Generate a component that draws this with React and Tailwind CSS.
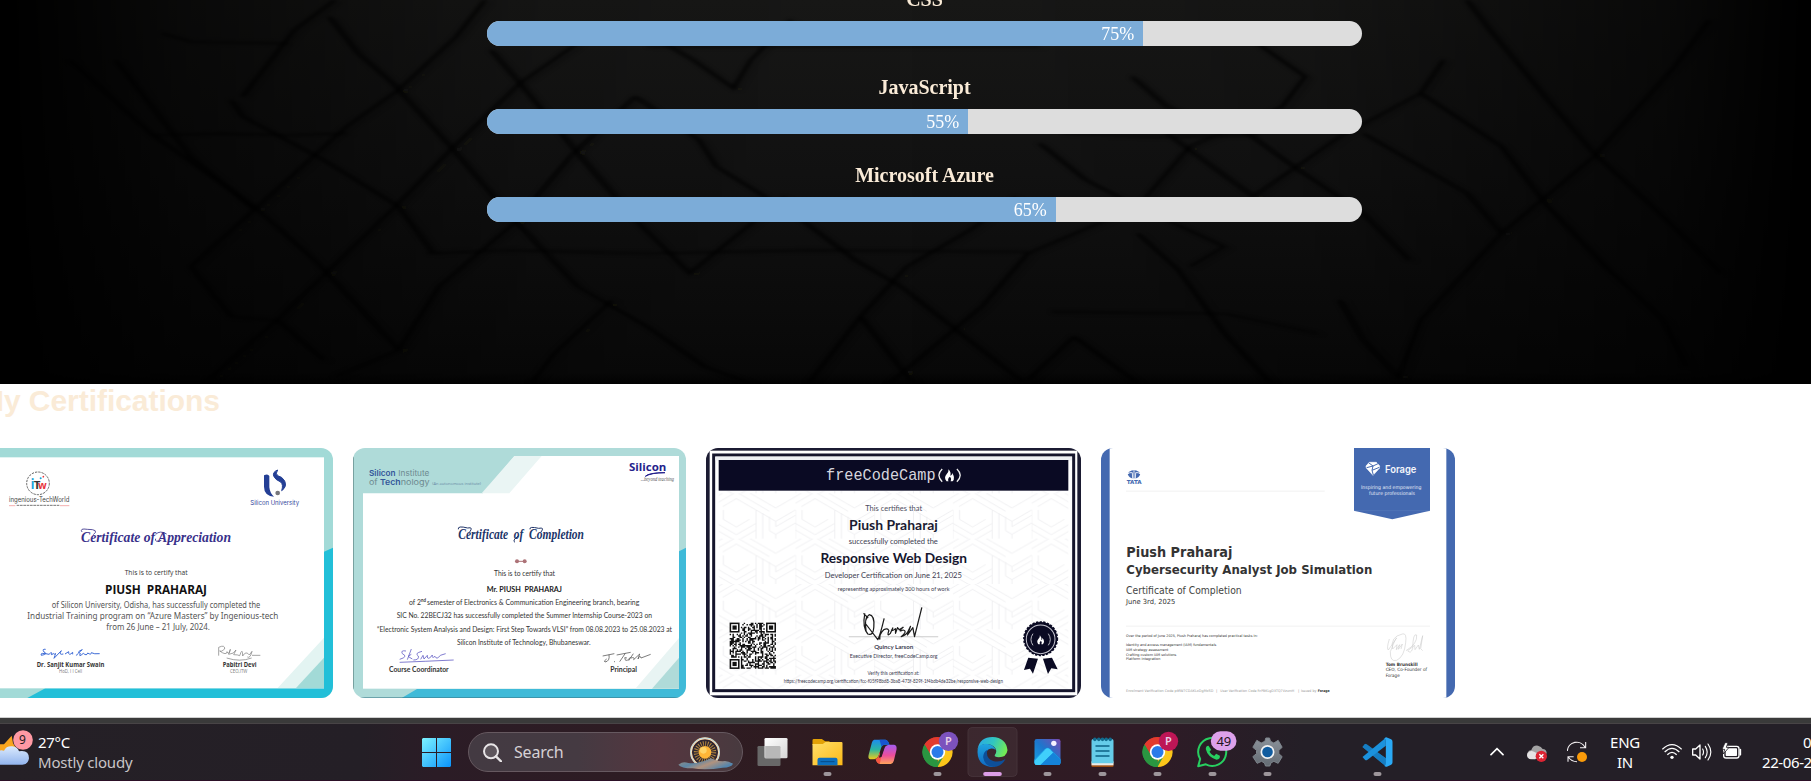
import React from "react";

const SANS = "'Noto Sans', sans-serif";
const OPEN = "'Open Sans', sans-serif";
const LATO = "Lato, sans-serif";
const DEJA = "'DejaVu Sans', sans-serif";

/* Text run inside a certificate, fitted to a given width. */
function T({ x, y, w, s, f = OPEN, c = "#333", b = 400, i, a = "start", children }) {
  return (
    <text x={x} y={y} textLength={w} lengthAdjust="spacingAndGlyphs" fontSize={s} fontFamily={f} fill={c} fontWeight={b} fontStyle={i ? "italic" : "normal"} textAnchor={a} xmlSpace="preserve">
      {children}
    </text>
  );
}

const CRACKS = [
  "420,0 395,110 345,270 300,380 220,630 165,800",
  "285,50 310,160 340,250 390,440 445,660 500,860",
  "60,180 130,400 220,620 275,790 345,1050",
  "100,180 165,470 220,630",
  "200,300 210,350 280,480 345,620 375,760",
  "500,130 450,250 390,450 345,610 300,760 240,960 180,1140",
  "565,110 600,180 635,265 650,180 685,60",
  "425,150 450,250 500,460 550,660 597,820 640,700 680,590",
  "290,1130 345,1050 380,860 445,670 495,465 550,290",
  "550,290 605,420 620,500 690,650 740,780 780,860 835,1010 885,1145",
  "140,100 165,125 250,130", "130,405 190,400 250,405 300,400", "210,290 255,90 290,0",
  "900,430 940,540 985,620 1060,740 1030,800",
  "980,230 1010,320 1080,400 1120,500 1180,640 1220,780",
  "1080,110 1130,230 1110,320 1030,440 985,620 890,760 850,920 770,1150",
  "1010,400 1085,590 1160,410 1230,280 1250,180",
  "1230,280 1300,440 1340,620 1390,800 1440,960 1460,1100",
  "1270,0 1290,90 1340,300 1380,460 1440,650 1490,820",
  "1480,60 1450,200 1380,470 1300,700 1230,960 1210,1140",
  "1180,400 1270,580 1300,700", "700,1150 745,950 785,800 840,690 880,590", "745,950 790,1150",
  "985,700 1020,810 1060,1000 1100,1150", "500,860 560,980 610,1100 650,1150",
  "370,760 440,750 560,760 700,750 890,755", "910,935 1060,940 1140,1000", "560,140 900,140",
  "920,400 1000,410 1090,405", "930,1010 890,1140", "930,1010 985,1150", "1160,900 1180,1020 1210,1130",
  "530,900 480,1060 460,1150", "165,800 200,950 240,960 280,1080",
];

function Backdrop() {
  return (
    <svg className="absolute inset-0 h-full w-full" viewBox="0 0 1568 1152" preserveAspectRatio="none" aria-hidden="true">
      <defs>
        <linearGradient id="wall" x1="0" y1="0" x2="0" y2="1">
          <stop offset="0" stopColor="#181817" /><stop offset="0.45" stopColor="#121212" /><stop offset="0.8" stopColor="#0c0c0c" /><stop offset="0.97" stopColor="#090909" /><stop offset="1" stopColor="#030303" />
        </linearGradient>
        <linearGradient id="sides" x1="0" y1="0" x2="1" y2="0">
          <stop offset="0" stopColor="#000" /><stop offset="0.1" stopColor="#000" stopOpacity="0.6" /><stop offset="0.3" stopColor="#000" stopOpacity="0.12" /><stop offset="0.5" stopColor="#000" stopOpacity="0" />
          <stop offset="0.72" stopColor="#000" stopOpacity="0.12" /><stop offset="0.92" stopColor="#000" stopOpacity="0.6" /><stop offset="1" stopColor="#000" />
        </linearGradient>
        <filter id="soft"><feGaussianBlur stdDeviation="1.8 4.5" /></filter>
      </defs>
      <rect width="1568" height="1152" fill="url(#wall)" />
      <g filter="url(#soft)" fill="none">
        {CRACKS.map((p) => <polyline key={"l" + p} points={p} transform="translate(6 5)" stroke="#242422" strokeWidth="3" opacity="0.22" />)}
        {CRACKS.map((p) => <polyline key={p} points={p} stroke="#000" strokeWidth="5" opacity="0.7" />)}
      </g>
      <rect width="1568" height="1152" fill="url(#sides)" />
    </svg>
  );
}

function Skill({ name, value }) {
  return (
    <div className="mb-[35px]">
      <h3 className="mb-[10px] h-[18px] text-center text-[20px] leading-[13px] font-bold text-[#faebd7]">{name}</h3>
      <div className="h-[25px] overflow-hidden rounded-full bg-[#ddd]">
        <div className="h-full bg-[#7cacd8] pr-[9px] text-right text-[18px] leading-[26px] text-white" style={{ width: value + "%" }}>{value}%</div>
      </div>
    </div>
  );
}

function AppreciationCert() {
  return (
    <svg className="h-[250px] w-[353px] shrink-0 rounded-[12px]" viewBox="-60 234 1059 750" preserveAspectRatio="none">
      <rect x="-60" y="234" width="1059" height="750" fill="#a2dad7" />
      <path d="M82 984 136 955H972V545L999 533V984Z" fill="#22bfd8" />
      <rect x="-33" y="262" width="1005" height="693" fill="#fff" />
      <path d="M833 954 972 803V954Z" fill="#e3f4f2" /><path d="M888 954 972 863V954Z" fill="#a2dad7" />
      <circle cx="114" cy="340" r="34" fill="none" stroke="#444" strokeWidth="2.5" strokeDasharray="7 3" />
      <T x={92} y={356} w={11} s={40} b={700} c="#18a5dc">i</T>
      <T x={101} y={356} w={20} s={34} b={700} c="#333">T</T>
      <T x={114} y={356} w={26} s={32} b={700} c="#e8343c">w</T>
      <circle cx="122" cy="325" r="3" fill="#18a5dc" /><circle cx="130" cy="320" r="2.5" fill="#e8343c" />
      <T x={27} y={397} w={181} s={21} f="Inter, sans-serif" c="#444">ingenious-TechWorld</T>
      <path d="M27 407H46M180 407H208" stroke="#e88" strokeWidth="2" /><path d="M50 406H178" stroke="#777" strokeWidth="3" strokeDasharray="8 2" />
      <path d="M792 316Q804 310 808 318V352Q810 370 822 380Q792 377 792 350Z" fill="#243f95" />
      <path d="M833 300Q817 306 821 318Q825 329 842 336Q851 344 845 362Q862 350 854 333Q847 320 833 317Q825 311 833 300Z" fill="#243f95" stroke="#243f95" strokeWidth="3" />
      <circle cx="833" cy="369" r="7" fill="#77777c" />
      <T x={751} y={404} w={146} s={19} f="Inter, sans-serif" c="#33479b">Silicon University</T>
      <T x={243} y={516} w={450} s={46} f="'Liberation Serif', serif" i b={700} c="#38308a">Certificate of Appreciation</T>
      <path d="M246 486Q238 474 262 478Q300 478 280 494M467 506Q462 518 484 511M467 493Q480 480 500 492" fill="none" stroke="#38308a" strokeWidth="2.5" />
      <T x={374} y={616} w={189} s={22}>This is to certify that</T>
      <T x={315} y={672} w={306} s={39} b={700} c="#111">PIUSH  PRAHARAJ</T>
      <T x={155} y={714} w={626} s={25} f={SANS} c="#555">of Silicon University, Odisha, has successfully completed the</T>
      <T x={82} y={747} w={753} s={25} f={SANS} c="#555">Industrial Training program on “Azure Masters” by Ingenious-tech</T>
      <T x={319} y={780} w={311} s={25} f={SANS} c="#555">from 26 June – 21 July, 2024.</T>
      <path d="M137 838Q125 836 132 846Q146 852 124 856Q118 846 147 853Q158 842 154 854Q164 848 164 853Q170 843 162 865L184 842Q175 856 190 852M195 852L206 845Q205 860 218 847V853M230 857Q226 856 247 839Q228 846 241 850Q234 864 250 850Q260 859 263 849Q274 856 274 848Q282 853 299 851" fill="none" stroke="#3d6bd6" strokeWidth="3" />
      <path d="M656 857V832Q675 823 674 837Q664 847 659 843Q680 858 681 845Q687 858 691 838L686 853Q702 852 708 840L701 854Q714 854 719 857Q728 830 728 858Q738 841 748 855L756 844Q751 866 742 861M756 856H781M680 864Q720 877 755 864" fill="none" stroke="#777" strokeWidth="2" />
      <T x={110} y={891} w={203} s={20} b={700} c="#333">Dr. Sanjit Kumar Swain</T>
      <T x={177} y={910} w={69} s={15} c="#777">HoD, I I Cell</T>
      <T x={668} y={891} w={102} s={20} b={700} c="#333">Pabitri Devi</T>
      <T x={690} y={910} w={52} s={14} c="#777">CEO,ITW</T>
    </svg>
  );
}

function CompletionCert() {
  return (
    <svg className="h-[250px] w-[333px] shrink-0 rounded-[12px]" viewBox="24 54 999 750" preserveAspectRatio="none">
      <rect x="24" y="54" width="999" height="750" fill="#afdbd9" />
      <path d="M170 804 216 777H1002V364L1023 353V804Z" fill="#3fbad8" />
      <rect x="54" y="78" width="948" height="698" fill="#fff" />
      <path d="M50 74H512L414 190H50Z" fill="#afdbd9" /><path d="M508 78H590L493 190H410Z" fill="#eaf5f4" />
      <path d="M871 776 1002 624V776Z" fill="#e8f4f3" /><path d="M921 776 1002 683V776Z" fill="#afdbd9" />
      <path d="M25 80V778" stroke="#4c7171" strokeWidth="2" /><path d="M46 803H1000" stroke="#38798a" strokeWidth="2" />
      <T x={72} y={139} w={80} s={24} f="Inter, sans-serif" b={600} c="#34579a">Silicon</T>
      <T x={160} y={139} w={93} s={24} f="Inter, sans-serif" c="#6d8a90">Institute</T>
      <T x={72} y={165} w={26} s={24} f="Inter, sans-serif" c="#6d8a90">of</T>
      <T x={105} y={165} w={62} s={24} f="Inter, sans-serif" b={600} c="#34579a">Tech</T>
      <T x={167} y={165} w={87} s={24} f="Inter, sans-serif" c="#6d8a90">nology</T>
      <T x={262} y={164} w={146} s={13} c="#6888a4">(An autonomous institute)</T>
      <T x={852} y={124} w={112} s={32} b={700} c="#24218c">Silicon</T>
      <path d="M901 139Q910 128 960 128Q920 128 901 139Z" fill="#24218c" stroke="#24218c" strokeWidth="3" />
      <T x={887} y={153} w={100} s={17} f="'Liberation Serif', serif" i c="#555">...beyond teaching</T>
      <T x={340} y={326} w={377} s={44} f="'Liberation Serif', serif" i b={700} c="#203468">Certificate  of  Completion</T>
      <path d="M340 298Q337 286 368 294Q386 290 374 306M555 298Q552 288 581 295Q600 291 588 306M510 337Q500 332 520 318" fill="none" stroke="#203468" strokeWidth="3" />
      <circle cx="516" cy="394" r="6" fill="#ad7378" /><circle cx="539" cy="394" r="6" fill="#ad7378" /><path d="M516 394H539" stroke="#ad7378" strokeWidth="3" />
      <T x={447} y={439} w={183} s={22} f={LATO} c="#333">This is to certify that</T>
      <T x={425} y={487} w={226} s={23} f={LATO} b={700} c="#222">Mr. PIUSH  PRAHARAJ</T>
      <text x="192" y="525" fontSize="22" fontFamily={LATO} fill="#333" textLength="691" lengthAdjust="spacingAndGlyphs">of 2<tspan fontSize="14" fontWeight="700" dy="-8">nd </tspan><tspan dy="8">semester of Electronics &amp; Communication Engineering branch, bearing</tspan></text>
      <T x={155} y={565} w={766} s={22} f={LATO}>SIC No. 22BECJ32 has successfully completed the Summer Internship Course-2023 on</T>
      <T x={96} y={605} w={885} s={22} f={LATO}>“Electronic System Analysis and Design: First Step Towards VLSI” from 08.08.2023 to 25.08.2023 at</T>
      <T x={336} y={645} w={401} s={22} f={LATO}>Silicon Institute of Technology, Bhubaneswar.</T>
      <path d="M183 663Q166 660 172 671Q191 680 164 688M199 657L187 689M199 673L189 679 202 687M231 664Q207 670 220 678Q223 690 205 690M227 688L234 676 237 687 247 676Q246 688 254 684L262 675Q260 687 270 679Q275 691 286 676M286 676L302 671M164 697Q240 694 326 690" fill="none" stroke="#6763c6" strokeWidth="2.5" />
      <path d="M773 678L808 671M792 674Q795 694 780 696Q774 694 785 687M807 696L810 694M815 675L857 667M841 670L824 695M837 685Q849 678 840 689Q846 696 857 681M865 671L851 692M858 684Q870 680 866 689L884 672L879 687Q885 673 888 684L917 673" fill="none" stroke="#555" strokeWidth="2.3" />
      <T x={132} y={725} w={179} s={21} f={LATO} b={700}>Course Coordinator</T>
      <T x={796} y={725} w={80} s={21} f={LATO} b={700}>Principal</T>
    </svg>
  );
}

function QrCode() {
  const cells = [];
  let seed = 41;
  const n = 33;
  for (let y = 0; y < n; y++)
    for (let x = 0; x < n; x++) {
      seed = (seed * 16807) % 2147483647;
      const finder = (x < 8 && y < 8) || (x > n - 9 && y < 8) || (x < 8 && y > n - 9);
      if (!finder && seed % 100 < 52) cells.push(`M${x} ${y}h1v1h-1z`);
    }
  return (
    <g transform="translate(105 578) scale(4.2)">
      <path d={cells.join("")} fill="#111" />
      {[[0, 0], [26, 0], [0, 26]].map(([x, y]) => (
        <g key={x + "-" + y}><rect x={x + 0.5} y={y + 0.5} width="6" height="6" fill="#fff" stroke="#111" strokeWidth="1.1" /><rect x={x + 2} y={y + 2} width="3" height="3" fill="#111" /></g>
      ))}
    </g>
  );
}

const Flame = () => <path d="M-3-18Q6-8 2 1Q9-1 7-8Q19 7 9 18H3Q7 9 1 4Q-7 10-3 18H-9Q-18 7-9-3Q-2-10-3-18Z" fill="#fff" />;

function CampCert() {
  const navy = "#0a0a23";
  return (
    <svg className="h-[250px] w-[375px] shrink-0 rounded-[12px]" viewBox="34 54 1124 750" preserveAspectRatio="none">
      <defs>
        <pattern id="weave" width="236" height="136" patternUnits="userSpaceOnUse" patternTransform="translate(66 190)">
          <g fill="none" stroke="#ededf0" strokeWidth="2.5">
            <path d="M0 10 59-24 118 10 177 44 236 10M0 30 59-4 100 20 158 54M18 40 59 16 118 50V136M0 50V90L59 124 118 90M20 50V78L59 101 98 78M118 50 177 84 236 50M138 60V136M158 70V112L177 123 236 89M177 84V100L236 66M0 90 0 136M0 110 59 144 118 110M177 123V136" />
          </g>
        </pattern>
      </defs>
      <rect x="34" y="54" width="1124" height="750" fill="#1b1b32" />
      <rect x="45" y="62" width="1102" height="734" fill="#fff" />
      <rect x="57" y="75" width="1079" height="707" fill="#fff" stroke="#15152c" strokeWidth="9" />
      <rect x="62" y="80" width="1069" height="11" fill="#eef0f4" />
      <rect x="72" y="182" width="1048" height="594" fill="url(#weave)" />
      <rect x="72" y="90" width="1048" height="92" fill={navy} />
      <T x={394} y={149} w={328} s={49} f="'Liberation Mono', monospace" c="#d6d6de">freeCodeCamp</T>
      <path d="M742 117Q722 136 742 155M786 117Q806 136 786 155" fill="none" stroke="#eee" strokeWidth="4" />
      <g transform="translate(764 136)"><Flame /></g>
      <T x={511} y={244} w={171} s={22} f={LATO} c="#4d4d60">This certifies that</T>
      <T x={463} y={300} w={266} s={42} f={LATO} b={700} c="#1b1b32">Piush Praharaj</T>
      <T x={462} y={341} w={267} s={22} f={LATO} c="#3b3b4f">successfully completed the</T>
      <T x={377} y={399} w={439} s={42} f={LATO} b={700} c="#16162e">Responsive Web Design</T>
      <T x={390} y={443} w={411} s={22} f={LATO} c="#3b3b4f">Developer Certification on June 21, 2025</T>
      <T x={429} y={484} w={335} s={18} f={LATO} c="#3b3b4f">representing approximately 300 hours of work</T>
      <path d="M462 620H730" stroke="#ccc" strokeWidth="3" />
      <path d="M510 550Q502 592 519 612Q536 618 537 591Q540 556 523 554Q507 563 514 605M506 550L520 564M513 582 549 629Q556 616 568 565M555 629Q553 611 567 599Q579 593 582 602Q575 621 586 611L594 594Q584 609 602 596V610L608 593 613 599 625 592Q607 608 625 600Q639 604 619 620Q635 614 639 605L647 589 638 615 654 593 659 620 681 532" fill="none" stroke="#1b1b1b" strokeWidth="3.7" strokeLinejoin="round" />
      <T x={538} y={657} w={117} s={19} f={LATO} b={700} c="#3b3b4f">Quincy Larson</T>
      <T x={465} y={683} w={263} s={17} f={LATO} c="#3b3b4f">Executive Director, freeCodeCamp.org</T>
      <T x={518} y={734} w={155} s={15} f={LATO} c="#3b3b4f">Verify this certification at:</T>
      <T x={267} y={759} w={657} s={15} f={LATO} c="#3b3b4f">https://freecodecamp.org/certification/fcc-f05f98bd8-3ba8-473f-829f-1f4bdb4de32be/responsive-web-design</T>
      <QrCode />
      <path d="M1000 683 987 720 1005 716 1014 731 1029 686M1071 683 1088 718 1069 715 1059 732 1044 686Z" fill={navy} />
      <circle cx="1037" cy="626" r="50" fill={navy} stroke={navy} strokeWidth="5" strokeDasharray="7 4" />
      <circle cx="1037" cy="628" r="43" fill="none" stroke="#c8c8d2" strokeWidth="3" />
      <path d="M1014 611Q1002 629 1014 646M1060 611Q1072 629 1060 646" fill="none" stroke="#d8d8e0" strokeWidth="2.5" />
      <g transform="translate(1037 629) scale(.75)"><Flame /></g>
    </svg>
  );
}

function ForageCert() {
  const blue = "#4469b0";
  return (
    <svg className="h-[250px] w-[354px] shrink-0 rounded-[12px]" viewBox="33 54 1062 750" preserveAspectRatio="none">
      <rect x="33" y="54" width="1062" height="750" fill={blue} />
      <rect x="59" y="54" width="1010" height="750" fill="#fff" />
      <path d="M792 54H1020V242L907 268 792 242Z" fill={blue} /><path d="M794 242H1018" stroke="#5b7dbd" strokeWidth="1.5" />
      <path d="M838 97H859L869 108 868 115 849 136 829 114 828 108Z" fill="#fff" stroke="#fff" strokeWidth="2" />
      <path d="M837 99 849 108 830 113M849 108 864 101M849 108 846 121 868 112M846 121 850 135" fill="none" stroke={blue} strokeWidth="3" />
      <T x={885} y={129} w={94} s={31} f="Inter, sans-serif" b={600} c="#f4f6fb">Forage</T>
      <T x={813} y={177} w={181} s={15} f={DEJA} c="#e4eaf6">Inspiring and empowering</T>
      <T x={837} y={195} w={138} s={15} f={DEJA} c="#e4eaf6">future professionals</T>
      <ellipse cx="132" cy="133" rx="18" ry="12" fill={blue} />
      <path d="M128 145 127 128Q119 126 113 132M136 145 137 128Q145 126 151 132M132 121V145" fill="none" stroke="#fff" strokeWidth="2.5" />
      <T x={110} y={162} w={45} s={16} f={DEJA} b={700} c={blue}>TATA</T>
      <path d="M108 183.500H704M108 588.500H1020" stroke="#ededed" strokeWidth="2.500" />
      <T x={109} y={382} w={318} s={44} f={DEJA} b={700}>Piush Praharaj</T>
      <T x={109} y={432} w={738} s={35} f={DEJA} b={700}>Cybersecurity Analyst Job Simulation</T>
      <T x={108} y={492} w={347} s={29} f={DEJA} c="#444">Certificate of Completion</T>
      <T x={108} y={522} w={148} s={21} f={DEJA}>June 3rd, 2025</T>
      <T x={108} y={622} w={395} s={10.5} f={DEJA}>Over the period of June 2025, Piush Praharaj has completed practical tasks in:</T>
      <T x={108} y={649} w={271} s={10.5} f={DEJA}>Identity and access management (IAM) fundamentals</T>
      <T x={108} y={663} w={127} s={10.5} f={DEJA}>IAM strategy assessment</T>
      <T x={108} y={677} w={151} s={10.5} f={DEJA}>Crafting custom IAM solutions</T>
      <T x={108} y={690} w={103} s={10.5} f={DEJA}>Platform integration</T>
      <path d="M898 627Q889 657 895 660L920 624Q918 621 901 665Q900 697 920 691Q943 680 947 638Q951 607 937 612Q900 620 908 657L921 644 919 659 929 644 925 658 937 642 933 657M948 662Q983 641 980 615Q969 607 968 656Q962 673 953 662L974 646 975 659 985 645 988 658 998 617 992 656 998 662" fill="none" stroke="#c9c9c9" strokeWidth="1.600" />
      <T x={887} y={707} w={96} s={13.5} f={DEJA} b={700}>Tom Brunskill</T>
      <T x={887} y={724} w={124} s={13.5} f={DEJA}>CEO, Co-Founder of</T>
      <T x={887} y={742} w={42} s={13.5} f={DEJA}>Forage</T>
      <T x={108} y={786} w={262} s={10.5} f={DEJA} c="#999">Enrolment Verification Code p9fW7CDAKLxDgMxSD</T>
      <T x={378} y={786} w={4} s={10.5} f={DEJA} c="#999">|</T>
      <T x={391} y={786} w={222} s={10.5} f={DEJA} c="#999">User Verification Code RrPBKLgDXTQ7VzumH</T>
      <T x={624} y={786} w={4} s={10.5} f={DEJA} c="#999">|</T>
      <T x={633} y={786} w={46} s={10.5} f={DEJA} c="#999">Issued by</T>
      <T x={683} y={786} w={36} s={10.5} f={DEJA} b={700}>Forage</T>
    </svg>
  );
}

/* One taskbar slot; the drawing inside is in a 165 x 174 grid starting at x. */
function Slot({ x, running, active, children }) {
  return (
    <svg className="h-[58px] w-[55px] shrink-0" viewBox={`${x} 39 165 174`}>
      {active && <rect x={x + 8.5} y="52.5" width="148" height="147" rx="13" fill="#fff" fillOpacity="0.06" stroke="#fff" strokeOpacity="0.09" strokeWidth="2.500" />}
      {children}
      {running && <rect x={x + 70.5} y="186" width="24" height="12" rx="6" fill="#9d969b" />}
      {active && <rect x={x + 54.5} y="186" width="56" height="12" rx="6" fill="#dc9ee6" />}
    </svg>
  );
}

function Chrome({ cx, badge }) {
  return (
    <>
      <g transform={`translate(${cx} 126)`}>
        <path d="M0 0-39-22.500A45 45 0 0 1 39-22.500Z" fill="#e33b2e" />
        <path d="M0 0 39-22.500A45 45 0 0 1 0 45Z" fill="#fcc61a" />
        <path d="M0 0 0 45A45 45 0 0 1-39-22.500Z" fill="#2a9641" />
        <path d="M0-22H39Q42-17 44-10H0Z" fill="#fcc61a" /><path d="M-39-22.500-19 11 0 0 0-22H38A45 45 0 0 0-39-22.500" fill="#e33b2e" />
        <path d="M-39-22.500-19 11 0 45A45 45 0 0 1-39-22.500Z" fill="#2a9641" />
        <path d="M19 11 0 45-8 44 10 15Z" fill="#2a9641" />
        <circle r="23" fill="#fff" /><circle r="18" fill="#2a7bea" />
      </g>
      <circle cx={cx + 33} cy="94" r="29" fill={badge} />
      <text x={cx + 33} y="105" fontSize="33" fontWeight="600" fontFamily={SANS} textAnchor="middle" fill="#e9cfe6">P</text>
    </>
  );
}

function AppIcons() {
  return (
    <div className="ml-[1.500px] flex">
      <Slot x={1006.5}>
        <defs><linearGradient id="tv" x2="1" y2="1"><stop stopColor="#fff" /><stop offset="1" stopColor="#d6d6d6" /></linearGradient></defs>
        <rect x="1044" y="108" width="69" height="60" rx="4" fill="#686868" />
        <rect x="1065" y="84" width="69" height="61" rx="4" fill="url(#tv)" />
        <path d="M1067 108H1109Q1113 108 1113 112V145H1067Z" fill="#b8b8b8" />
      </Slot>
      <Slot x={1171.5} running>
        <defs><linearGradient id="fold" x1="0" y1="0" x2="1" y2="1"><stop stopColor="#ffdf69" /><stop offset="1" stopColor="#fbb917" /></linearGradient></defs>
        <path d="M1209 91Q1209 87 1213 87H1237L1247 94H1260V105H1209Z" fill="#e2a106" />
        <path d="M1209 102H1240L1248 96H1296Q1299 96 1299 100V166H1209Z" fill="url(#fold)" />
        <path d="M1224 166V149Q1224 143 1230 143H1278Q1284 143 1284 149V166Z" fill="#0c6fbe" /><path d="M1233 155H1275" stroke="#064b86" strokeWidth="3" />
      </Slot>
      <Slot x={1336.5}>
        <defs>
          <linearGradient id="cpA" x1="0" y1="0" x2="0" y2="1"><stop stopColor="#1c8cf0" /><stop offset="0.5" stopColor="#2bb6a2" /><stop offset="1" stopColor="#f0c918" /></linearGradient>
          <linearGradient id="cpB" x1="0" y1="0" x2="0" y2="1"><stop stopColor="#a35cf0" /><stop offset="0.55" stopColor="#ec4d9c" /><stop offset="1" stopColor="#ffa45a" /></linearGradient>
        </defs>
        <path d="M1394 89H1428Q1436 90 1440 104H1426Q1418 104 1415 113L1407 138Q1402 148 1391 148H1382Q1374 146 1378 132L1387 98Q1389 91 1394 89Z" fill="url(#cpA)" />
        <path d="M1410 89H1428Q1436 90 1440 104H1426Q1420 104 1416 110Z" fill="#1755cf" />
        <path d="M1444 162H1412Q1402 160 1399 148Q1412 149 1416 137L1424 115Q1429 104 1441 104H1454Q1463 106 1461 119L1453 152Q1451 160 1444 162Z" fill="url(#cpB)" />
        <path d="M1399 148H1391Q1402 148 1407 138L1411 126 1415 140 1411 162Q1401 160 1399 148Z" fill="#f4553f" />
        <path d="M1418 113 1426 111 1416 141 1408 143Z" fill="#2d1b22" />
      </Slot>
      <Slot x={31.5} running><Chrome cx={114} badge="#7c52bd" /></Slot>
      <Slot x={196.5} active>
        <defs>
          <linearGradient id="edA" x1="0" y1="0.2" x2="1" y2="0.5"><stop stopColor="#2aa8e6" /><stop offset="0.5" stopColor="#31c6c0" /><stop offset="1" stopColor="#73ec54" /></linearGradient>
          <linearGradient id="edB" x1="0" y1="0" x2="0" y2="1"><stop stopColor="#1fa5e0" /><stop offset="1" stopColor="#1168c0" /></linearGradient>
        </defs>
        <path d="M234 118Q241 81 279 81Q320 83 324 121Q321 142 298 142Q283 141 286 135Q294 125 287 114Q276 101 258 102Q242 104 234 118Z" fill="url(#edA)" />
        <path d="M234 126Q234 102 258 101Q282 102 289 120Q272 109 260 125Q252 145 268 160Q280 172 292 169Q282 172 271 170Q235 165 234 126Z" fill="url(#edB)" />
        <path d="M264 119Q257 144 281 153Q300 158 318 147Q307 169 283 171Q255 169 251 142Q251 126 264 119Z" fill="#0d4f99" />
      </Slot>
      <Slot x={361.5} running>
        <defs><linearGradient id="pho" x1="0" y1="1" x2="1" y2="0"><stop stopColor="#16a3e3" /><stop offset="0.5" stopColor="#1d76cd" /><stop offset="1" stopColor="#7b49b0" /></linearGradient></defs>
        <rect x="405" y="87" width="78" height="78" rx="7" fill="url(#pho)" />
        <path d="M405 147 436 117Q444 110 452 117L483 147V158Q483 165 476 165H412Q405 165 405 158Z" fill="#199be6" />
        <path d="M405 152 438 118Q444 112 451 118L461 128 423 165H412Q405 165 405 158Z" fill="#40cffb" />
        <path d="M444 145 461 128 483 149V158Q483 165 476 165H423Z" fill="#1583d9" /><circle cx="463" cy="100" r="8" fill="#f6f1ff" />
      </Slot>
      <Slot x={526.5} running>
        <rect x="576" y="156" width="66" height="15" rx="3" fill="#9c4d13" /><rect x="576" y="154" width="66" height="12" fill="#ecebe7" />
        <path d="M576 92Q576 87 581 87H637Q642 87 642 92V160H576Z" fill="#65cce9" /><path d="M588 108H630M588 123H630M588 138H630" stroke="#0c6285" strokeWidth="5" />
        {[586, 598, 609, 620, 632].map((x) => <circle key={x} cx={x} cy="88" r="5.500" fill="#116b8d" />)}
      </Slot>
      <Slot x={691.5} running><Chrome cx={774} badge="#bd1656" /></Slot>
      <Slot x={856.5} running>
        <path d="M896 169 902 147A42 42 0 1 1 919 163Z" fill="none" stroke="#27cf60" strokeWidth="6" strokeLinejoin="round" />
        <path d="M927 107Q918 108 919 118Q925 142 951 149Q963 147 961 137L950 131 944 138Q934 133 930 125L935 119Z" fill="#27cf60" />
        <rect x="934" y="64" width="77" height="58" rx="29" fill="#dda1ea" />
        <text x="973" y="107" fontSize="39" fontFamily={SANS} textAnchor="middle" fill="#1d1420">49</text>
      </Slot>
      <Slot x={1021.5} running>
        <defs><linearGradient id="gear" x2="0" y2="1"><stop stopColor="#8c939b" /><stop offset="1" stopColor="#646b73" /></linearGradient></defs>
        <path d="M1096 94 1099 84H1110L1113 94 1123 99 1136 91 1148 112 1138 121V131L1148 140 1136 160 1123 154 1114 159 1111 168H1098L1095 159 1086 154 1073 160 1060 140 1071 131V121L1060 112 1072 91 1085 99Z" fill="url(#gear)" stroke="#7e858c" strokeWidth="3" strokeLinejoin="round" />
        <circle cx="1104" cy="126" r="21" fill="#f2f3f4" /><circle cx="1104" cy="126" r="16" fill="#115c9f" />
      </Slot>
      <Slot x={1186.5} />
      <Slot x={1351.5} running>
        <path d="M1389 111 1396 103Q1400 101 1404 104L1459 145V169Z" fill="#1679ba" />
        <path d="M1389 111 1459 169V145L1397 101Z" fill="#167dc2" />
        <path d="M1389 141 1397 150Q1400 152 1404 149L1459 107V83Z" fill="#1b92dd" />
        <path d="M1456 84Q1459 80 1464 83L1475 88Q1479 90 1479 95V157Q1479 162 1475 164L1462 170Q1458 171 1454 167Q1459 168 1459 160V92Q1459 84 1452 86Z" fill="#2aa9f5" />
      </Slot>
    </div>
  );
}

function Taskbar() {
  return (
    <div className="mt-[19px] h-[64px] border-t border-[#cfcfcf] bg-[#3a3a3a] pt-[5px]">
      <div className="flex h-[58px] items-center bg-[linear-gradient(90deg,#252026_0%,#241f26_20%,#2b1c26_24%,#2e1c22_38%,#301b20_50%,#2f1b26_63%,#241f27_72%,#241f27_100%)] font-['Noto_Sans',sans-serif] text-white shadow-[inset_0_1px_#484446,inset_0_-1px_#2c1027]">
        <div className="flex w-[422px] items-center">
          <svg className="h-[58px] w-[33px]" viewBox="0 39 99 174">
            <defs><linearGradient id="cloud" x2="0" y2="1"><stop stopColor="#dbeafd" /><stop offset="1" stopColor="#93b5ee" /></linearGradient></defs>
            <path d="M-6 103 12 103 35 77 39 100 51 119 30 138-6 130Z" fill="#f9a51f" />
            <path d="M-10 164V130Q-2 117 12 122Q19 107 37 109Q53 110 57 124Q87 119 87 145Q84 164 67 164Z" fill="url(#cloud)" />
            <circle cx="69" cy="90" r="29.500" fill="#ff99a4" />
            <text x="67" y="103" fontSize="36" fontFamily={SANS} textAnchor="middle" fill="#241c20">9</text>
          </svg>
          <div className="-mt-[1px] ml-[5px] text-[15px] leading-[20px]">
            <div className="tracking-[-0.3px]">27°C</div>
            <div className="tracking-[-0.2px] text-[#c9c5c8]">Mostly cloudy</div>
          </div>
        </div>
        <svg className="h-[29px] w-[29px]" viewBox="0 0 29 29">
          <defs><linearGradient id="win" x2="1" y2="1"><stop stopColor="#7df3ff" /><stop offset="1" stopColor="#0a93fb" /></linearGradient></defs>
          <path d="M1 0H14V14H0V1ZM15 0H28L29 1V14H15ZM0 15H14V29H1L0 28ZM15 15H29V28L28 29H15Z" fill="url(#win)" />
        </svg>
        <div className="ml-[17px] flex h-[40px] w-[275px] items-center rounded-full border border-[#665960] bg-[linear-gradient(90deg,#433a42,#453a42_40%,#55363f_70%,#483a3f)] pl-[14px] pr-[8px]">
          <svg className="h-[19px] w-[19px]" viewBox="218 97 57 57"><circle cx="242" cy="122" r="21" fill="#5e565d" stroke="#e8e5e7" strokeWidth="6" /><path d="M257 137 272 152" stroke="#e8e5e7" strokeWidth="7" strokeLinecap="round" /></svg>
          <span className="ml-[12px] text-[16px] tracking-[-0.2px] text-[#d6d1d5]">Search</span>
          <svg className="ml-auto h-[38px] w-[56px]" viewBox="806 70 168 114">
            <defs><linearGradient id="wave" x2="1" y2="0.5"><stop stopColor="#a08d78" /><stop offset="0.4" stopColor="#5d87a6" /><stop offset="0.65" stopColor="#b1927e" /><stop offset="1" stopColor="#5285ae" /></linearGradient></defs>
            <circle cx="887" cy="128" r="42" fill="#2f2631" stroke="#efb070" strokeWidth="6" /><circle cx="887" cy="128" r="43.500" fill="none" stroke="#a9ddf0" strokeWidth="3" /><circle cx="887" cy="128" r="41" fill="none" stroke="#fff1dc" strokeWidth="2" />
            <circle cx="887" cy="128" r="26" fill="none" stroke="#b5883f" strokeWidth="15" strokeDasharray="2.800 4" />
            <circle cx="887" cy="128" r="19" fill="#ffb637" /><circle cx="882" cy="122" r="10" fill="#ffd468" />
            <path d="M807 165Q820 153 837 160Q858 162 872 157Q888 154 905 146Q924 155 940 155Q952 151 971 162Q967 173 940 174Q890 182 850 176Q815 176 807 165Z" fill="url(#wave)" />
          </svg>
        </div>
        <AppIcons />
        <svg className="ml-[85.500px] h-[58px] w-[14px]" viewBox="270 39 42 174"><path d="M273 134 291 116 309 134" fill="none" stroke="#fff" strokeWidth="5" strokeLinecap="round" /></svg>
        <svg className="ml-[23px] h-[58px] w-[20px]" viewBox="381 39 60 174">
          <path d="M392 148Q378 143 382 129Q386 120 394 120Q399 105 414 107Q424 109 428 117Q439 117 440 129L430 146Z" fill="#a4a3a4" />
          <path d="M389 147Q378 141 383 130Q389 120 402 125L414 131 406 148Z" fill="#e5e3e4" />
          <circle cx="424" cy="139" r="17" fill="#dc2433" /><path d="M418 133 430 145M430 133 418 145" stroke="#fff" strokeWidth="4" />
        </svg>
        <svg className="ml-[20px] h-[58px] w-[20px]" viewBox="501 39 60 174">
          <path d="M502 123A28 28 0 0 1 555 112M557 96V113H540M531 155Q514 155 505 141M504 155V140H521" fill="none" stroke="#f4f1f3" strokeWidth="3.200" />
          <circle cx="546" cy="141" r="15" fill="#fa9b0a" />
        </svg>
        <div className="ml-[18px] w-[40px] text-center text-[15px] leading-[20px] tracking-[-0.3px]"><div>ENG</div><div>IN</div></div>
        <svg className="ml-[17px] h-[58px] w-[20px]" viewBox="786 39 60 174">
          <path d="M787 118Q816 90 845 118M794 126Q816 104 838 126M802 134Q816 120 830 134" fill="none" stroke="#fff" strokeWidth="4" /><circle cx="816" cy="142" r="5" fill="#fff" />
        </svg>
        <svg className="ml-[10px] h-[58px] w-[20px]" viewBox="876 39 60 174">
          <path d="M878 117H887L900 105V147L887 135H878Z" fill="none" stroke="#fff" strokeWidth="4" strokeLinejoin="round" /><path d="M908 117Q913 126 908 135M916 109Q927 126 916 143M924 102Q941 126 924 150" fill="none" stroke="#fff" strokeWidth="3.400" strokeLinecap="round" />
        </svg>
        <svg className="ml-[10px] h-[58px] w-[20px]" viewBox="966 39 60 174">
          <rect x="971" y="109" width="46" height="35" rx="7" fill="none" stroke="#fff" strokeWidth="4" /><rect x="977" y="115" width="34" height="23" rx="2" fill="#fff" /><path d="M1021 119V134" stroke="#fff" strokeWidth="5" strokeLinecap="round" />
          <path d="M975 98 966 118H974L970 132 987 112H979L984 98Z" fill="#fff" stroke="#241f27" strokeWidth="2.500" />
        </svg>
        <div className="-mt-[1px] ml-[20px] w-[49px] overflow-hidden text-[15px] leading-[20px] whitespace-nowrap"><div className="pl-[41px]">0</div><div className="tracking-[-0.4px]">22-06-2</div></div>
      </div>
    </div>
  );
}

export default function App() {
  return (
    <main className="h-[781px] w-[1811px] overflow-hidden bg-white">
      <section className="relative h-[384px] overflow-hidden bg-black">
        <Backdrop />
        <div className="relative mx-auto -mt-[7px] w-[875px] translate-x-[19px] font-['Liberation_Serif',serif]">
          <Skill name="CSS" value={75} />
          <Skill name="JavaScript" value={55} />
          <Skill name="Microsoft Azure" value={65} />
        </div>
      </section>
      <section className="-ml-[20px]">
        <h2 className="-ml-[1px] h-[64px] font-['Liberation_Sans',sans-serif] text-[30px] leading-[34px] font-bold tracking-[-0.05px] text-[#faebd7]">My Certifications</h2>
        <div className="flex gap-[20px]">
          <AppreciationCert />
          <CompletionCert />
          <CampCert />
          <ForageCert />
        </div>
      </section>
      <Taskbar />
    </main>
  );
}
